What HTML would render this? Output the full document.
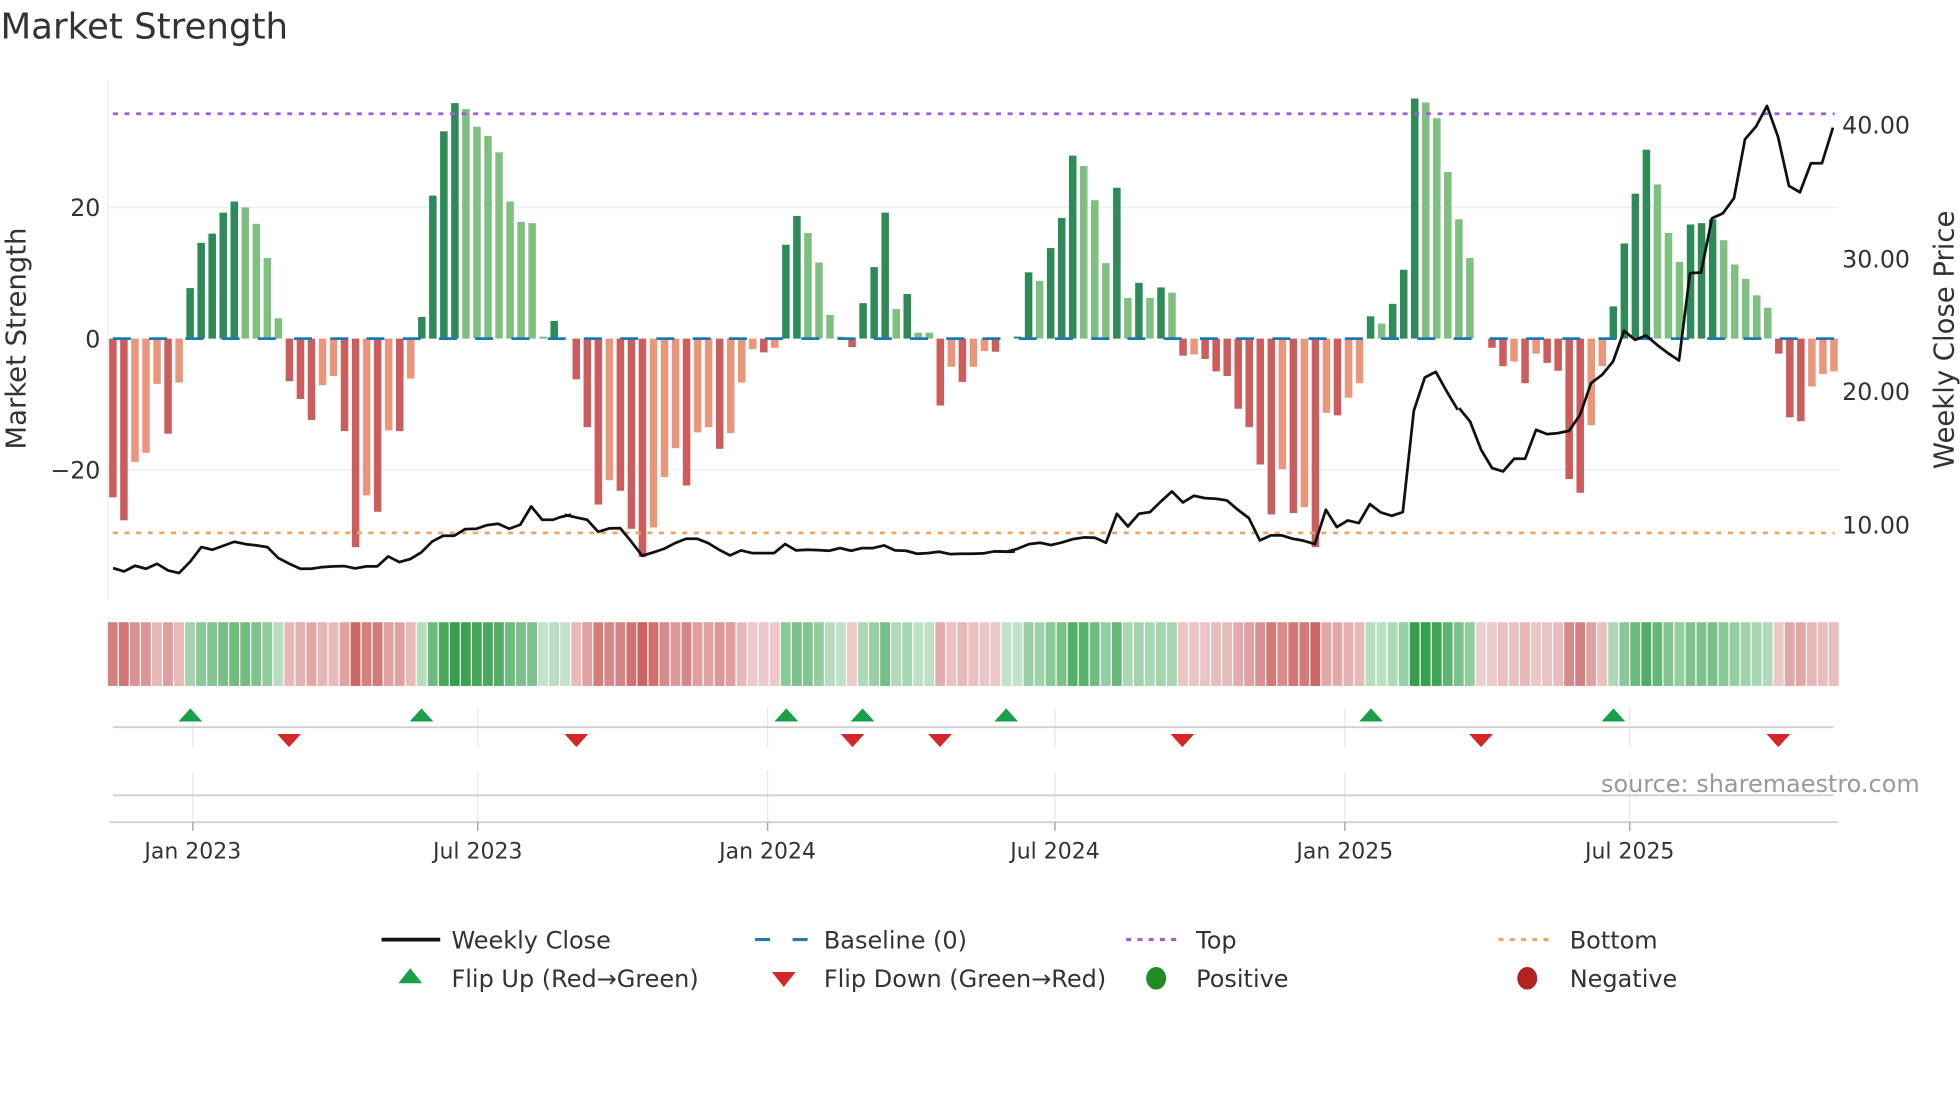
<!DOCTYPE html>
<html><head><meta charset="utf-8"><style>
html,body{margin:0;padding:0;background:#fff}
svg{display:block}
text{font-family:"DejaVu Sans","Liberation Sans",sans-serif;fill:#333}
.a{fill:#2e8b57}.b{fill:#7fbf7f}.c{fill:#cd5c5c}.d{fill:#e9967a}
.R{fill:#c85a5a}.G{fill:#34a04c}
</style></head><body>
<svg width="1960" height="1102" viewBox="0 0 1568 882" xmlns="http://www.w3.org/2000/svg">
<text x="0" y="31" font-size="28.5">Market Strength</text>
<line x1="86" y1="65" x2="86" y2="480" stroke="#e9ebef" stroke-width="1"/>
<line x1="86" y1="166" x2="1471" y2="166" stroke="#eceff4" stroke-width="1.2"/>
<line x1="86" y1="376" x2="1471" y2="376" stroke="#eceff4" stroke-width="1.2"/>
<text x="80" y="173" font-size="19" text-anchor="end">20</text>
<text x="80" y="278" font-size="19" text-anchor="end">0</text>
<text x="80" y="383" font-size="19" text-anchor="end">−20</text>
<text x="1474" y="107" font-size="19">40.00</text>
<text x="1474" y="214" font-size="19">30.00</text>
<text x="1474" y="320" font-size="19">20.00</text>
<text x="1474" y="427" font-size="19">10.00</text>
<text transform="translate(20,271) rotate(-90)" font-size="22" text-anchor="middle">Market Strength</text>
<text transform="translate(1563,272) rotate(-90)" font-size="22" text-anchor="middle">Weekly Close Price</text>
<g transform="translate(87,271) scale(8.83,-5.25)">
<rect class="c" x="0" y="-24.2" width=".68" height="24.2"/>
<rect class="c" x="1" y="-27.7" width=".68" height="27.7"/>
<rect class="d" x="2" y="-18.8" width=".68" height="18.8"/>
<rect class="d" x="3" y="-17.4" width=".68" height="17.4"/>
<rect class="d" x="4" y="-6.9" width=".68" height="6.9"/>
<rect class="c" x="5" y="-14.5" width=".68" height="14.5"/>
<rect class="d" x="6" y="-6.7" width=".68" height="6.7"/>
<rect class="a" x="7" y="0" width=".68" height="7.7"/>
<rect class="a" x="8" y="0" width=".68" height="14.6"/>
<rect class="a" x="9" y="0" width=".68" height="16"/>
<rect class="a" x="10" y="0" width=".68" height="19.2"/>
<rect class="a" x="11" y="0" width=".68" height="20.9"/>
<rect class="b" x="12" y="0" width=".68" height="20"/>
<rect class="b" x="13" y="0" width=".68" height="17.5"/>
<rect class="b" x="14" y="0" width=".68" height="12.3"/>
<rect class="b" x="15" y="0" width=".68" height="3.1"/>
<rect class="c" x="16" y="-6.5" width=".68" height="6.5"/>
<rect class="c" x="17" y="-9.2" width=".68" height="9.2"/>
<rect class="c" x="18" y="-12.4" width=".68" height="12.4"/>
<rect class="d" x="19" y="-7.1" width=".68" height="7.1"/>
<rect class="d" x="20" y="-5.7" width=".68" height="5.7"/>
<rect class="c" x="21" y="-14.1" width=".68" height="14.1"/>
<rect class="c" x="22" y="-31.8" width=".68" height="31.8"/>
<rect class="d" x="23" y="-23.9" width=".68" height="23.9"/>
<rect class="c" x="24" y="-26.4" width=".68" height="26.4"/>
<rect class="d" x="25" y="-14" width=".68" height="14"/>
<rect class="c" x="26" y="-14.1" width=".68" height="14.1"/>
<rect class="d" x="27" y="-6.1" width=".68" height="6.1"/>
<rect class="a" x="28" y="0" width=".68" height="3.3"/>
<rect class="a" x="29" y="0" width=".68" height="21.8"/>
<rect class="a" x="30" y="0" width=".68" height="31.6"/>
<rect class="a" x="31" y="0" width=".68" height="35.9"/>
<rect class="b" x="32" y="0" width=".68" height="35"/>
<rect class="b" x="33" y="0" width=".68" height="32.3"/>
<rect class="b" x="34" y="0" width=".68" height="30.9"/>
<rect class="b" x="35" y="0" width=".68" height="28.4"/>
<rect class="b" x="36" y="0" width=".68" height="20.9"/>
<rect class="b" x="37" y="0" width=".68" height="17.8"/>
<rect class="b" x="38" y="0" width=".68" height="17.6"/>
<rect class="b" x="39" y="0" width=".68" height="0.3"/>
<rect class="a" x="40" y="0" width=".68" height="2.7"/>
<rect class="c" x="42" y="-6.2" width=".68" height="6.2"/>
<rect class="c" x="43" y="-13.5" width=".68" height="13.5"/>
<rect class="c" x="44" y="-25.3" width=".68" height="25.3"/>
<rect class="d" x="45" y="-21.6" width=".68" height="21.6"/>
<rect class="c" x="46" y="-23.2" width=".68" height="23.2"/>
<rect class="c" x="47" y="-29" width=".68" height="29"/>
<rect class="c" x="48" y="-33.3" width=".68" height="33.3"/>
<rect class="d" x="49" y="-28.8" width=".68" height="28.8"/>
<rect class="d" x="50" y="-21.1" width=".68" height="21.1"/>
<rect class="d" x="51" y="-16.7" width=".68" height="16.7"/>
<rect class="c" x="52" y="-22.4" width=".68" height="22.4"/>
<rect class="d" x="53" y="-14.3" width=".68" height="14.3"/>
<rect class="d" x="54" y="-13.5" width=".68" height="13.5"/>
<rect class="c" x="55" y="-16.8" width=".68" height="16.8"/>
<rect class="d" x="56" y="-14.4" width=".68" height="14.4"/>
<rect class="d" x="57" y="-6.7" width=".68" height="6.7"/>
<rect class="d" x="58" y="-1.6" width=".68" height="1.6"/>
<rect class="c" x="59" y="-2.1" width=".68" height="2.1"/>
<rect class="d" x="60" y="-1.4" width=".68" height="1.4"/>
<rect class="a" x="61" y="0" width=".68" height="14.3"/>
<rect class="a" x="62" y="0" width=".68" height="18.7"/>
<rect class="b" x="63" y="0" width=".68" height="16.1"/>
<rect class="b" x="64" y="0" width=".68" height="11.6"/>
<rect class="b" x="65" y="0" width=".68" height="3.6"/>
<rect class="b" x="66" y="0" width=".68" height="0.3"/>
<rect class="c" x="67" y="-1.3" width=".68" height="1.3"/>
<rect class="a" x="68" y="0" width=".68" height="5.4"/>
<rect class="a" x="69" y="0" width=".68" height="10.9"/>
<rect class="a" x="70" y="0" width=".68" height="19.2"/>
<rect class="b" x="71" y="0" width=".68" height="4.5"/>
<rect class="a" x="72" y="0" width=".68" height="6.8"/>
<rect class="b" x="73" y="0" width=".68" height="0.9"/>
<rect class="b" x="74" y="0" width=".68" height="0.9"/>
<rect class="c" x="75" y="-10.2" width=".68" height="10.2"/>
<rect class="d" x="76" y="-4.3" width=".68" height="4.3"/>
<rect class="c" x="77" y="-6.6" width=".68" height="6.6"/>
<rect class="d" x="78" y="-4.3" width=".68" height="4.3"/>
<rect class="d" x="79" y="-1.9" width=".68" height="1.9"/>
<rect class="c" x="80" y="-2" width=".68" height="2"/>
<rect class="a" x="82" y="0" width=".68" height="0.3"/>
<rect class="a" x="83" y="0" width=".68" height="10.1"/>
<rect class="b" x="84" y="0" width=".68" height="8.8"/>
<rect class="a" x="85" y="0" width=".68" height="13.8"/>
<rect class="a" x="86" y="0" width=".68" height="18.4"/>
<rect class="a" x="87" y="0" width=".68" height="27.9"/>
<rect class="b" x="88" y="0" width=".68" height="26.3"/>
<rect class="b" x="89" y="0" width=".68" height="21.1"/>
<rect class="b" x="90" y="0" width=".68" height="11.5"/>
<rect class="a" x="91" y="0" width=".68" height="23"/>
<rect class="b" x="92" y="0" width=".68" height="6.2"/>
<rect class="a" x="93" y="0" width=".68" height="8.5"/>
<rect class="b" x="94" y="0" width=".68" height="6.2"/>
<rect class="a" x="95" y="0" width=".68" height="7.8"/>
<rect class="b" x="96" y="0" width=".68" height="7"/>
<rect class="c" x="97" y="-2.6" width=".68" height="2.6"/>
<rect class="d" x="98" y="-2.4" width=".68" height="2.4"/>
<rect class="c" x="99" y="-3.1" width=".68" height="3.1"/>
<rect class="c" x="100" y="-5" width=".68" height="5"/>
<rect class="c" x="101" y="-5.7" width=".68" height="5.7"/>
<rect class="c" x="102" y="-10.7" width=".68" height="10.7"/>
<rect class="c" x="103" y="-13.5" width=".68" height="13.5"/>
<rect class="c" x="104" y="-19.2" width=".68" height="19.2"/>
<rect class="c" x="105" y="-26.8" width=".68" height="26.8"/>
<rect class="d" x="106" y="-19.9" width=".68" height="19.9"/>
<rect class="c" x="107" y="-26.6" width=".68" height="26.6"/>
<rect class="d" x="108" y="-25.7" width=".68" height="25.7"/>
<rect class="c" x="109" y="-31.8" width=".68" height="31.8"/>
<rect class="d" x="110" y="-11.3" width=".68" height="11.3"/>
<rect class="c" x="111" y="-11.7" width=".68" height="11.7"/>
<rect class="d" x="112" y="-9" width=".68" height="9"/>
<rect class="d" x="113" y="-6.8" width=".68" height="6.8"/>
<rect class="a" x="114" y="0" width=".68" height="3.4"/>
<rect class="b" x="115" y="0" width=".68" height="2.3"/>
<rect class="a" x="116" y="0" width=".68" height="5.3"/>
<rect class="a" x="117" y="0" width=".68" height="10.5"/>
<rect class="a" x="118" y="0" width=".68" height="36.6"/>
<rect class="b" x="119" y="0" width=".68" height="36"/>
<rect class="b" x="120" y="0" width=".68" height="33.6"/>
<rect class="b" x="121" y="0" width=".68" height="25.4"/>
<rect class="b" x="122" y="0" width=".68" height="18.2"/>
<rect class="b" x="123" y="0" width=".68" height="12.3"/>
<rect class="c" x="125" y="-1.4" width=".68" height="1.4"/>
<rect class="c" x="126" y="-4.2" width=".68" height="4.2"/>
<rect class="d" x="127" y="-3.5" width=".68" height="3.5"/>
<rect class="c" x="128" y="-6.8" width=".68" height="6.8"/>
<rect class="d" x="129" y="-2.3" width=".68" height="2.3"/>
<rect class="c" x="130" y="-3.7" width=".68" height="3.7"/>
<rect class="c" x="131" y="-4.9" width=".68" height="4.9"/>
<rect class="c" x="132" y="-21.4" width=".68" height="21.4"/>
<rect class="c" x="133" y="-23.5" width=".68" height="23.5"/>
<rect class="d" x="134" y="-13.2" width=".68" height="13.2"/>
<rect class="d" x="135" y="-4.2" width=".68" height="4.2"/>
<rect class="a" x="136" y="0" width=".68" height="4.9"/>
<rect class="a" x="137" y="0" width=".68" height="14.5"/>
<rect class="a" x="138" y="0" width=".68" height="22.1"/>
<rect class="a" x="139" y="0" width=".68" height="28.8"/>
<rect class="b" x="140" y="0" width=".68" height="23.5"/>
<rect class="b" x="141" y="0" width=".68" height="16.1"/>
<rect class="b" x="142" y="0" width=".68" height="11.7"/>
<rect class="a" x="143" y="0" width=".68" height="17.4"/>
<rect class="a" x="144" y="0" width=".68" height="17.6"/>
<rect class="a" x="145" y="0" width=".68" height="18.2"/>
<rect class="b" x="146" y="0" width=".68" height="15"/>
<rect class="b" x="147" y="0" width=".68" height="11.3"/>
<rect class="b" x="148" y="0" width=".68" height="9.1"/>
<rect class="b" x="149" y="0" width=".68" height="6.6"/>
<rect class="b" x="150" y="0" width=".68" height="4.7"/>
<rect class="c" x="151" y="-2.3" width=".68" height="2.3"/>
<rect class="c" x="152" y="-12" width=".68" height="12"/>
<rect class="c" x="153" y="-12.6" width=".68" height="12.6"/>
<rect class="d" x="154" y="-7.3" width=".68" height="7.3"/>
<rect class="d" x="155" y="-5.4" width=".68" height="5.4"/>
<rect class="d" x="156" y="-5" width=".68" height="5"/>
</g>
<line x1="90" y1="91" x2="1468" y2="91" stroke="#9b5de5" stroke-width="2.2" stroke-dasharray="4,5.3"/>
<line x1="90" y1="426.5" x2="1468" y2="426.5" stroke="#f4a460" stroke-width="2.2" stroke-dasharray="4,5.3"/>
<line x1="90" y1="271" x2="1468" y2="271" stroke="#1f77b4" stroke-width="2.2" stroke-dasharray="14.4,14.6"/>
<g fill="none" stroke="#111" stroke-width="2.75" stroke-linejoin="round">
<g transform="translate(80,64) scale(0.266667)"><polyline vector-effect="non-scaling-stroke" points="38,1465 71,1475 104,1458 137,1467 170,1452 203,1472 236,1480 270,1445 303,1402 336,1410 369,1398 402,1386 435,1393 468,1397 501,1402 534,1435 567,1452 600,1467 633,1467 666,1462 699,1460 732,1459 765,1466 798,1460 831,1460 864,1430 897,1447 930,1438 963,1418 996,1385 1029,1368 1062,1368 1095,1348 1128,1347 1161,1336 1194,1332 1227,1347 1260,1335 1293,1280 1326,1320 1359,1320 1380,1312 1413,1305"/></g>
<g transform="translate(440,64) scale(0.266667)"><polyline vector-effect="non-scaling-stroke" points="43,1305 78,1313 111,1320 144,1356 177,1346 210,1345 243,1385 276,1428 309,1418 342,1407 375,1390 408,1377 441,1377 474,1390 507,1410 540,1427 573,1412 606,1420 639,1420 672,1420 705,1393 738,1412 771,1410 804,1411 837,1413 870,1405 903,1413 936,1405 969,1405 1002,1397 1035,1412 1068,1413 1101,1422 1134,1420 1167,1416 1200,1423 1233,1422 1266,1422 1299,1421 1332,1415 1380,1416 1395,1415"/></g>
<g transform="translate(800,64) scale(0.266667)"><polyline vector-effect="non-scaling-stroke" points="-5,1415 20,1416 50,1408 87,1393 120,1389 153,1396 186,1388 219,1378 252,1373 285,1374 318,1389 351,1302 384,1340 417,1302 450,1297 483,1265 516,1235 549,1268 582,1248 615,1255 648,1257 681,1262 714,1290 747,1315 780,1382 813,1367 846,1367 879,1377 912,1383 945,1393 978,1290 1011,1342 1044,1322 1077,1330 1110,1273 1143,1298 1176,1308 1209,1297 1242,993 1275,893 1308,876 1341,935 1374,990"/></g>
<g transform="translate(1160,64) scale(0.266667)"><polyline vector-effect="non-scaling-stroke" points="28,985 61,1025 94,1110 127,1165 160,1175 193,1137 226,1137 259,1050 292,1063 325,1060 358,1053 391,1005 424,910 457,885 490,845 523,753 556,780 589,767 622,795 655,820 688,842 721,580 754,578 787,415 820,400 853,355 886,178 919,140 952,78 985,170 1018,318 1051,337 1084,250 1117,250 1150,143"/></g>
</g>
<g transform="translate(86,498) scale(8.83,1)">
<rect class="R" x="0" width=".89" height="51" fill-opacity=".77"/>
<rect class="R" x="1" width=".89" height="51" fill-opacity=".84"/>
<rect class="R" x="2" width=".89" height="51" fill-opacity=".66"/>
<rect class="R" x="3" width=".89" height="51" fill-opacity=".64"/>
<rect class="R" x="4" width=".89" height="51" fill-opacity=".43"/>
<rect class="R" x="5" width=".89" height="51" fill-opacity=".58"/>
<rect class="R" x="6" width=".89" height="51" fill-opacity=".43"/>
<rect class="G" x="7" width=".89" height="51" fill-opacity=".45"/>
<rect class="G" x="8" width=".89" height="51" fill-opacity=".58"/>
<rect class="G" x="9" width=".89" height="51" fill-opacity=".61"/>
<rect class="G" x="10" width=".89" height="51" fill-opacity=".67"/>
<rect class="G" x="11" width=".89" height="51" fill-opacity=".71"/>
<rect class="G" x="12" width=".89" height="51" fill-opacity=".69"/>
<rect class="G" x="13" width=".89" height="51" fill-opacity=".64"/>
<rect class="G" x="14" width=".89" height="51" fill-opacity=".54"/>
<rect class="G" x="15" width=".89" height="51" fill-opacity=".36"/>
<rect class="R" x="16" width=".89" height="51" fill-opacity=".43"/>
<rect class="R" x="17" width=".89" height="51" fill-opacity=".48"/>
<rect class="R" x="18" width=".89" height="51" fill-opacity=".54"/>
<rect class="R" x="19" width=".89" height="51" fill-opacity=".44"/>
<rect class="R" x="20" width=".89" height="51" fill-opacity=".41"/>
<rect class="R" x="21" width=".89" height="51" fill-opacity=".57"/>
<rect class="R" x="22" width=".89" height="51" fill-opacity=".92"/>
<rect class="R" x="23" width=".89" height="51" fill-opacity=".76"/>
<rect class="R" x="24" width=".89" height="51" fill-opacity=".81"/>
<rect class="R" x="25" width=".89" height="51" fill-opacity=".57"/>
<rect class="R" x="26" width=".89" height="51" fill-opacity=".57"/>
<rect class="R" x="27" width=".89" height="51" fill-opacity=".42"/>
<rect class="G" x="28" width=".89" height="51" fill-opacity=".36"/>
<rect class="G" x="29" width=".89" height="51" fill-opacity=".72"/>
<rect class="G" x="30" width=".89" height="51" fill-opacity=".91"/>
<rect class="G" x="31" width=".89" height="51" fill-opacity="1"/>
<rect class="G" x="32" width=".89" height="51" fill-opacity=".98"/>
<rect class="G" x="33" width=".89" height="51" fill-opacity=".93"/>
<rect class="G" x="34" width=".89" height="51" fill-opacity=".9"/>
<rect class="G" x="35" width=".89" height="51" fill-opacity=".85"/>
<rect class="G" x="36" width=".89" height="51" fill-opacity=".71"/>
<rect class="G" x="37" width=".89" height="51" fill-opacity=".65"/>
<rect class="G" x="38" width=".89" height="51" fill-opacity=".64"/>
<rect class="G" x="39" width=".89" height="51" fill-opacity=".3"/>
<rect class="G" x="40" width=".89" height="51" fill-opacity=".35"/>
<rect class="G" x="41" width=".89" height="51" fill-opacity=".3"/>
<rect class="R" x="42" width=".89" height="51" fill-opacity=".42"/>
<rect class="R" x="43" width=".89" height="51" fill-opacity=".56"/>
<rect class="R" x="44" width=".89" height="51" fill-opacity=".79"/>
<rect class="R" x="45" width=".89" height="51" fill-opacity=".72"/>
<rect class="R" x="46" width=".89" height="51" fill-opacity=".75"/>
<rect class="R" x="47" width=".89" height="51" fill-opacity=".86"/>
<rect class="R" x="48" width=".89" height="51" fill-opacity=".95"/>
<rect class="R" x="49" width=".89" height="51" fill-opacity=".86"/>
<rect class="R" x="50" width=".89" height="51" fill-opacity=".71"/>
<rect class="R" x="51" width=".89" height="51" fill-opacity=".62"/>
<rect class="R" x="52" width=".89" height="51" fill-opacity=".73"/>
<rect class="R" x="53" width=".89" height="51" fill-opacity=".58"/>
<rect class="R" x="54" width=".89" height="51" fill-opacity=".56"/>
<rect class="R" x="55" width=".89" height="51" fill-opacity=".63"/>
<rect class="R" x="56" width=".89" height="51" fill-opacity=".58"/>
<rect class="R" x="57" width=".89" height="51" fill-opacity=".43"/>
<rect class="R" x="58" width=".89" height="51" fill-opacity=".33"/>
<rect class="R" x="59" width=".89" height="51" fill-opacity=".34"/>
<rect class="R" x="60" width=".89" height="51" fill-opacity=".33"/>
<rect class="G" x="61" width=".89" height="51" fill-opacity=".58"/>
<rect class="G" x="62" width=".89" height="51" fill-opacity=".66"/>
<rect class="G" x="63" width=".89" height="51" fill-opacity=".61"/>
<rect class="G" x="64" width=".89" height="51" fill-opacity=".53"/>
<rect class="G" x="65" width=".89" height="51" fill-opacity=".37"/>
<rect class="G" x="66" width=".89" height="51" fill-opacity=".31"/>
<rect class="R" x="67" width=".89" height="51" fill-opacity=".33"/>
<rect class="G" x="68" width=".89" height="51" fill-opacity=".4"/>
<rect class="G" x="69" width=".89" height="51" fill-opacity=".51"/>
<rect class="G" x="70" width=".89" height="51" fill-opacity=".67"/>
<rect class="G" x="71" width=".89" height="51" fill-opacity=".39"/>
<rect class="G" x="72" width=".89" height="51" fill-opacity=".43"/>
<rect class="G" x="73" width=".89" height="51" fill-opacity=".32"/>
<rect class="G" x="74" width=".89" height="51" fill-opacity=".32"/>
<rect class="R" x="75" width=".89" height="51" fill-opacity=".5"/>
<rect class="R" x="76" width=".89" height="51" fill-opacity=".38"/>
<rect class="R" x="77" width=".89" height="51" fill-opacity=".43"/>
<rect class="R" x="78" width=".89" height="51" fill-opacity=".38"/>
<rect class="R" x="79" width=".89" height="51" fill-opacity=".34"/>
<rect class="R" x="80" width=".89" height="51" fill-opacity=".34"/>
<rect class="G" x="81" width=".89" height="51" fill-opacity=".3"/>
<rect class="G" x="82" width=".89" height="51" fill-opacity=".31"/>
<rect class="G" x="83" width=".89" height="51" fill-opacity=".5"/>
<rect class="G" x="84" width=".89" height="51" fill-opacity=".47"/>
<rect class="G" x="85" width=".89" height="51" fill-opacity=".57"/>
<rect class="G" x="86" width=".89" height="51" fill-opacity=".66"/>
<rect class="G" x="87" width=".89" height="51" fill-opacity=".84"/>
<rect class="G" x="88" width=".89" height="51" fill-opacity=".81"/>
<rect class="G" x="89" width=".89" height="51" fill-opacity=".71"/>
<rect class="G" x="90" width=".89" height="51" fill-opacity=".52"/>
<rect class="G" x="91" width=".89" height="51" fill-opacity=".75"/>
<rect class="G" x="92" width=".89" height="51" fill-opacity=".42"/>
<rect class="G" x="93" width=".89" height="51" fill-opacity=".46"/>
<rect class="G" x="94" width=".89" height="51" fill-opacity=".42"/>
<rect class="G" x="95" width=".89" height="51" fill-opacity=".45"/>
<rect class="G" x="96" width=".89" height="51" fill-opacity=".44"/>
<rect class="R" x="97" width=".89" height="51" fill-opacity=".35"/>
<rect class="R" x="98" width=".89" height="51" fill-opacity=".35"/>
<rect class="R" x="99" width=".89" height="51" fill-opacity=".36"/>
<rect class="R" x="100" width=".89" height="51" fill-opacity=".4"/>
<rect class="R" x="101" width=".89" height="51" fill-opacity=".41"/>
<rect class="R" x="102" width=".89" height="51" fill-opacity=".51"/>
<rect class="R" x="103" width=".89" height="51" fill-opacity=".56"/>
<rect class="R" x="104" width=".89" height="51" fill-opacity=".67"/>
<rect class="R" x="105" width=".89" height="51" fill-opacity=".82"/>
<rect class="R" x="106" width=".89" height="51" fill-opacity=".69"/>
<rect class="R" x="107" width=".89" height="51" fill-opacity=".82"/>
<rect class="R" x="108" width=".89" height="51" fill-opacity=".8"/>
<rect class="R" x="109" width=".89" height="51" fill-opacity=".92"/>
<rect class="R" x="110" width=".89" height="51" fill-opacity=".52"/>
<rect class="R" x="111" width=".89" height="51" fill-opacity=".53"/>
<rect class="R" x="112" width=".89" height="51" fill-opacity=".47"/>
<rect class="R" x="113" width=".89" height="51" fill-opacity=".43"/>
<rect class="G" x="114" width=".89" height="51" fill-opacity=".37"/>
<rect class="G" x="115" width=".89" height="51" fill-opacity=".34"/>
<rect class="G" x="116" width=".89" height="51" fill-opacity=".4"/>
<rect class="G" x="117" width=".89" height="51" fill-opacity=".5"/>
<rect class="G" x="118" width=".89" height="51" fill-opacity="1"/>
<rect class="G" x="119" width=".89" height="51" fill-opacity="1"/>
<rect class="G" x="120" width=".89" height="51" fill-opacity=".95"/>
<rect class="G" x="121" width=".89" height="51" fill-opacity=".79"/>
<rect class="G" x="122" width=".89" height="51" fill-opacity=".65"/>
<rect class="G" x="123" width=".89" height="51" fill-opacity=".54"/>
<rect class="R" x="124" width=".89" height="51" fill-opacity=".3"/>
<rect class="R" x="125" width=".89" height="51" fill-opacity=".33"/>
<rect class="R" x="126" width=".89" height="51" fill-opacity=".38"/>
<rect class="R" x="127" width=".89" height="51" fill-opacity=".37"/>
<rect class="R" x="128" width=".89" height="51" fill-opacity=".43"/>
<rect class="R" x="129" width=".89" height="51" fill-opacity=".34"/>
<rect class="R" x="130" width=".89" height="51" fill-opacity=".37"/>
<rect class="R" x="131" width=".89" height="51" fill-opacity=".4"/>
<rect class="R" x="132" width=".89" height="51" fill-opacity=".72"/>
<rect class="R" x="133" width=".89" height="51" fill-opacity=".76"/>
<rect class="R" x="134" width=".89" height="51" fill-opacity=".56"/>
<rect class="R" x="135" width=".89" height="51" fill-opacity=".38"/>
<rect class="G" x="136" width=".89" height="51" fill-opacity=".4"/>
<rect class="G" x="137" width=".89" height="51" fill-opacity=".58"/>
<rect class="G" x="138" width=".89" height="51" fill-opacity=".73"/>
<rect class="G" x="139" width=".89" height="51" fill-opacity=".86"/>
<rect class="G" x="140" width=".89" height="51" fill-opacity=".76"/>
<rect class="G" x="141" width=".89" height="51" fill-opacity=".61"/>
<rect class="G" x="142" width=".89" height="51" fill-opacity=".53"/>
<rect class="G" x="143" width=".89" height="51" fill-opacity=".64"/>
<rect class="G" x="144" width=".89" height="51" fill-opacity=".64"/>
<rect class="G" x="145" width=".89" height="51" fill-opacity=".65"/>
<rect class="G" x="146" width=".89" height="51" fill-opacity=".59"/>
<rect class="G" x="147" width=".89" height="51" fill-opacity=".52"/>
<rect class="G" x="148" width=".89" height="51" fill-opacity=".48"/>
<rect class="G" x="149" width=".89" height="51" fill-opacity=".43"/>
<rect class="G" x="150" width=".89" height="51" fill-opacity=".39"/>
<rect class="R" x="151" width=".89" height="51" fill-opacity=".34"/>
<rect class="R" x="152" width=".89" height="51" fill-opacity=".53"/>
<rect class="R" x="153" width=".89" height="51" fill-opacity=".54"/>
<rect class="R" x="154" width=".89" height="51" fill-opacity=".44"/>
<rect class="R" x="155" width=".89" height="51" fill-opacity=".4"/>
<rect class="R" x="156" width=".89" height="51" fill-opacity=".4"/>
</g>
<g stroke="#e6e9ef" stroke-width="1">
<path d="M154 566V598M154 617V658M382 566V598M382 617V658M614 566V598M614 617V658M844 566V598M844 617V658M1076 566V598M1076 617V658M1304 566V598M1304 617V658"/>
</g>
<line x1="90" y1="582" x2="1467" y2="582" stroke="#d0d0d0" stroke-width="1.5"/>
<line x1="90" y1="636.5" x2="1467" y2="636.5" stroke="#d0d0d0" stroke-width="1.5"/>
<line x1="87" y1="658" x2="1471" y2="658" stroke="#d0d0d0" stroke-width="1.5"/>
<g stroke="#aaa" stroke-width="1.2"><path d="M154 658V665M382 658V665M614 658V665M844 658V665M1076 658V665M1304 658V665"/></g>
<g fill="#1a9e48">
<polygon points="142.5,577.5 161.5,577.5 152,567"/>
<polygon points="327.5,577.5 346.5,577.5 337,567"/>
<polygon points="619.5,577.5 638.5,577.5 629,567"/>
<polygon points="680.5,577.5 699.5,577.5 690,567"/>
<polygon points="795.5,577.5 814.5,577.5 805,567"/>
<polygon points="1087.5,577.5 1106.5,577.5 1097,567"/>
<polygon points="1281.5,577.5 1300.5,577.5 1291,567"/>
</g>
<g fill="#d62728">
<polygon points="221.5,587.5 240.5,587.5 231,598"/>
<polygon points="451.5,587.5 470.5,587.5 461,598"/>
<polygon points="672.5,587.5 691.5,587.5 682,598"/>
<polygon points="742.5,587.5 761.5,587.5 752,598"/>
<polygon points="936.5,587.5 955.5,587.5 946,598"/>
<polygon points="1175.5,587.5 1194.5,587.5 1185,598"/>
<polygon points="1413.5,587.5 1432.5,587.5 1423,598"/>
</g>
<text x="1281" y="634" font-size="19.2" style="fill:#999">source: sharemaestro.com</text>
<g font-size="17.6" text-anchor="middle">
<text x="154" y="687">Jan 2023</text>
<text x="382" y="687">Jul 2023</text>
<text x="614" y="687">Jan 2024</text>
<text x="844" y="687">Jul 2024</text>
<text x="1076" y="687">Jan 2025</text>
<text x="1304" y="687">Jul 2025</text>
</g>
<line x1="305" y1="752" x2="352" y2="752" stroke="#111" stroke-width="3"/>
<line x1="604" y1="752" x2="648" y2="752" stroke="#1f77b4" stroke-width="2.5" stroke-dasharray="12,18"/>
<line x1="901" y1="752" x2="946" y2="752" stroke="#9b5de5" stroke-width="2.5" stroke-dasharray="4,5"/>
<line x1="1199" y1="752" x2="1244" y2="752" stroke="#f4a460" stroke-width="2.5" stroke-dasharray="4,5"/>
<polygon points="318.5,787 337.5,787 328,775" fill="#1a9e48"/>
<polygon points="617.5,778 636.5,778 627,790" fill="#d62728"/>
<ellipse cx="925" cy="783" rx="8" ry="9" fill="#228b22"/>
<ellipse cx="1222" cy="783" rx="8" ry="9" fill="#b22222"/>
<g font-size="19.2">
<text x="361" y="759">Weekly Close</text>
<text x="659" y="759">Baseline (0)</text>
<text x="957" y="759">Top</text>
<text x="1256" y="759">Bottom</text>
<text x="361" y="790">Flip Up (Red→Green)</text>
<text x="659" y="790">Flip Down (Green→Red)</text>
<text x="957" y="790">Positive</text>
<text x="1256" y="790">Negative</text>
</g>
</svg>
</body></html>
